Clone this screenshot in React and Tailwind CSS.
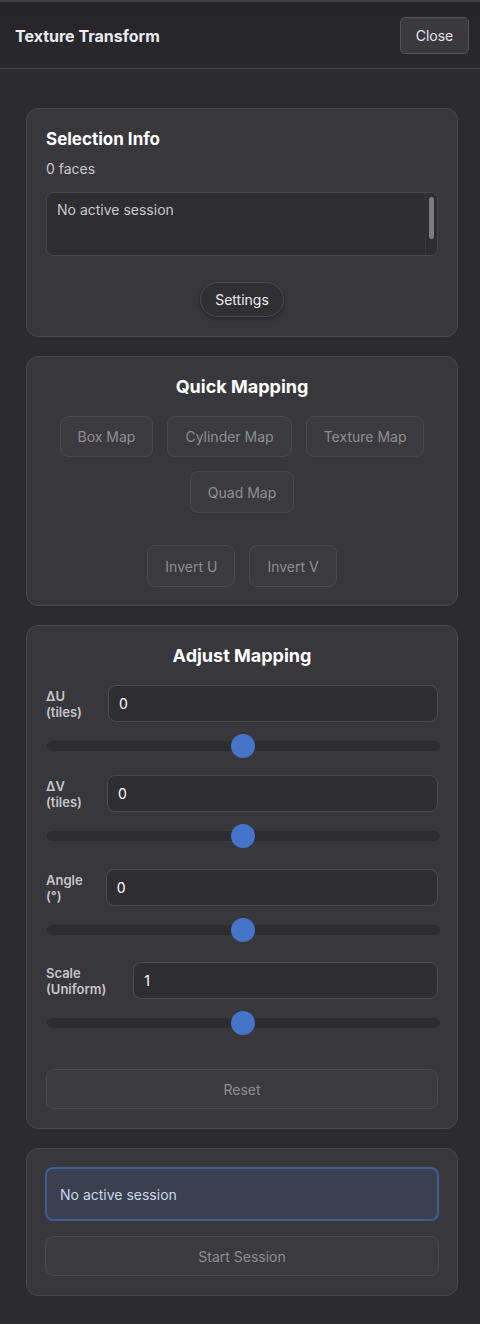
import React from "react";

const font = { fontFamily: "Inter, 'Liberation Sans', sans-serif" };

function Card({ className = "", children }) {
  return (
    <div className={"rounded-[12px] border border-[#4a494f] bg-[#38373c] " + className}>
      {children}
    </div>
  );
}

function GhostBtn({ children, className = "" }) {
  return (
    <button className={"h-[41px] rounded-[8px] border border-[#4a494f] bg-[#3b3a3f] px-[17px] text-[14px] text-[#8e8e93] " + className}>
      {children}
    </button>
  );
}

function Slider() {
  return (
    <div className="relative -mr-[2px] mt-[12px] flex h-[24px] items-center pl-[1px]">
      <div className="h-[10px] w-full rounded-full bg-[#2d2d30]" />
      <div className="absolute left-1/2 top-0 h-[24px] w-[24px] -translate-x-1/2 rounded-full bg-[#4674c8]" />
    </div>
  );
}

function Field({ label1, label2, value, gap, className = "" }) {
  return (
    <div className={className}>
      <div className="flex items-center">
        <div className={"text-[13px] font-semibold leading-[16px] text-[#c6c6ca] " + gap}>
          <div>{label1}</div>
          <div>{label2}</div>
        </div>
        <div className="flex h-[37px] flex-1 items-center rounded-[8px] border border-[#4d4c52] bg-[#2f2f32] px-[10px] text-[14px] text-white">
          {value}
        </div>
      </div>
      <Slider />
    </div>
  );
}

export default function App() {
  return (
    <div style={font} className="min-h-[1324px] w-[480px] border-t-[2px] border-[#3e3e43] bg-[#2c2c2e]">
      <div className="flex h-[67px] items-center justify-between border-b border-[#4a4a50] bg-gradient-to-b from-[#242428] to-[#2a2a2e] pl-[15px] pr-[11px]">
        <div className="pt-[2px] text-[16px] font-bold text-[#ececf0]">Texture Transform</div>
        <button className="h-[37px] w-[69px] rounded-[5px] border border-[#555459] bg-[#3a393e] text-[14px] text-[#e6e6ea]">
          Close
        </button>
      </div>

      <div className="flex flex-col gap-[19px] pb-[29px] pl-[26px] pr-[22px] pt-[39px]">
        <Card className="px-[19px] pb-[19px] pt-[19px]">
          <div className="text-[17px] font-bold leading-[22px] text-white">Selection Info</div>
          <div className="mt-[10px] text-[14px] leading-[18px] text-[#c8c8cc]">0 faces</div>
          <div className="mt-[14px] flex h-[64px] rounded-[7px] border border-[#48474c] bg-[#2e2e31]">
            <div className="flex-1 px-[10px] py-[8px] text-[14px] leading-[18px] text-[#c8c8cc]">No active session</div>
            <div className="flex w-[12px] justify-center border-l border-[#38383b] py-[4px]">
              <div className="h-[42px] w-[5px] rounded-full bg-[#7b7b80]" />
            </div>
          </div>
          <div className="mt-[26px] flex justify-center">
            <button className="h-[35px] rounded-full border border-[#4d4c52] bg-[#303033] px-[14px] text-[14px] text-[#ececf0] shadow-[0_2px_4px_rgba(0,0,0,0.35)]">
              Settings
            </button>
          </div>
        </Card>

        <Card className="px-[19px] pb-[18px] pt-[19px]">
          <div className="text-center text-[18px] font-bold leading-[22px] text-white">Quick Mapping</div>
          <div className="mt-[18px] flex flex-wrap justify-center gap-x-[14px] gap-y-[14px]">
            <GhostBtn>Box Map</GhostBtn>
            <GhostBtn>Cylinder Map</GhostBtn>
            <GhostBtn>Texture Map</GhostBtn>
            <GhostBtn className="h-[42px]">Quad Map</GhostBtn>
          </div>
          <div className="mt-[32px] flex justify-center gap-[14px]">
            <GhostBtn className="h-[42px]">Invert U</GhostBtn>
            <GhostBtn className="h-[42px]">Invert V</GhostBtn>
          </div>
        </Card>

        <Card className="px-[19px] pb-[19px] pt-[19px]">
          <div className="text-center text-[18px] font-bold leading-[22px] text-white">Adjust Mapping</div>
          <div className="mt-[18px] flex flex-col">
            <Field label1="ΔU" label2="(tiles)" value="0" gap="mr-[26px]" className="mb-[17px]" />
            <Field label1="ΔV" label2="(tiles)" value="0" gap="mr-[25px]" className="mb-[21px]" />
            <Field label1="Angle" label2="(°)" value="0" gap="mr-[23px]" className="mb-[20px]" />
            <Field label1="Scale" label2="(Uniform)" value="1" gap="mr-[27px]" />
          </div>
          <button className="mt-[34px] h-[40px] w-full rounded-[8px] border border-[#4a494f] bg-[#3b3a3f] text-[14px] text-[#8e8e93]">
            Reset
          </button>
        </Card>

        <Card className="px-[18px] pb-[19px] pt-[18px]">
          <div className="flex h-[54px] items-center rounded-[8px] border-[2px] border-[#3e5d98] bg-[#3a4050] px-[13px] text-[14px] text-[#cad6ea]">
            No active session
          </div>
          <button className="mt-[15px] h-[40px] w-full rounded-[8px] border border-[#4a494f] bg-[#3b3a3f] text-[14px] text-[#8e8e93]">
            Start Session
          </button>
        </Card>
      </div>
    </div>
  );
}
